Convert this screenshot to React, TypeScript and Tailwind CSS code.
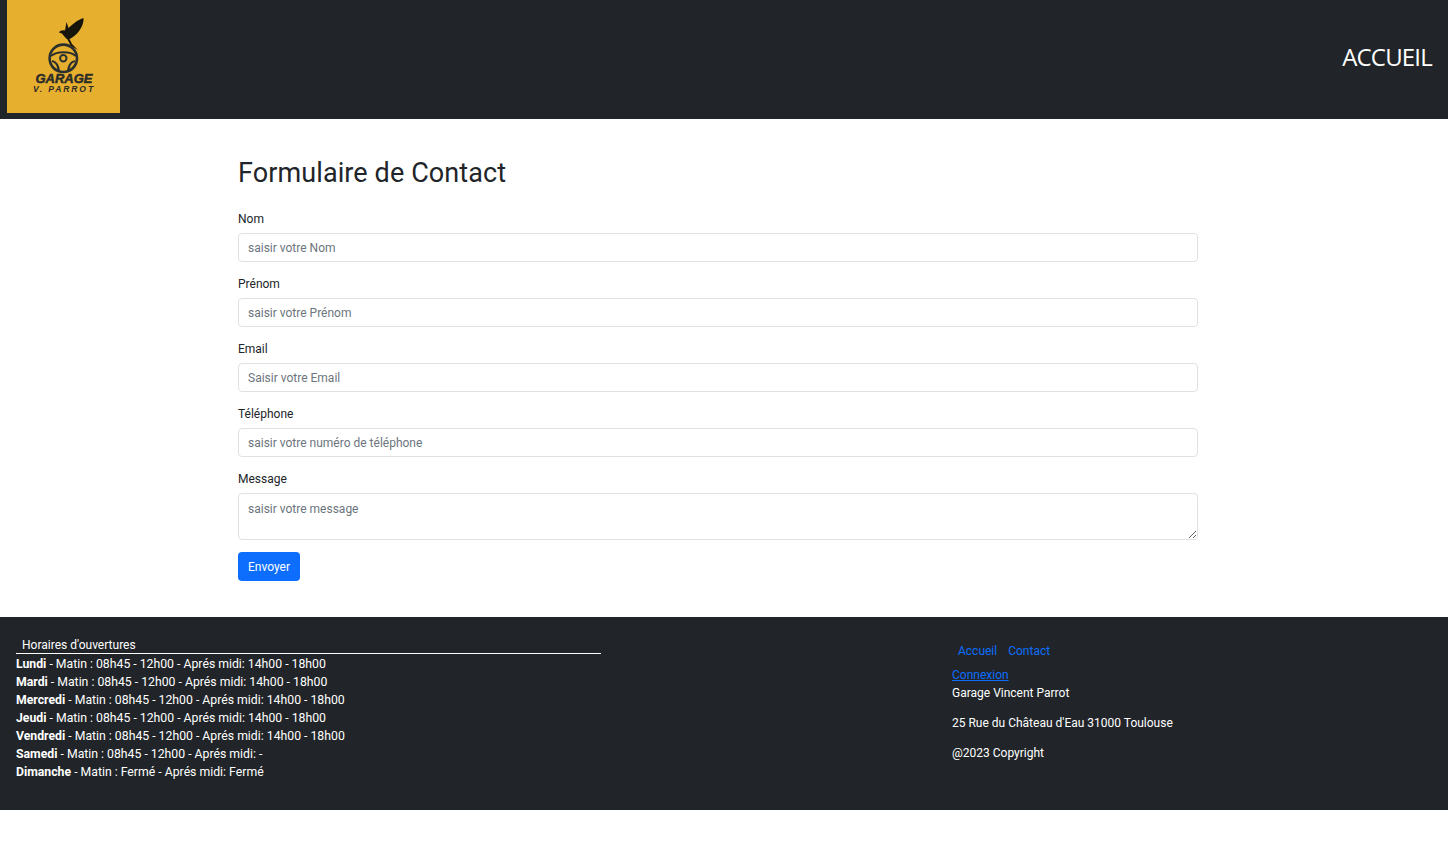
const fields = [
  { label: 'Nom', placeholder: 'saisir votre Nom' },
  { label: 'Prénom', placeholder: 'saisir votre Prénom' },
  { label: 'Email', placeholder: 'Saisir votre Email' },
  { label: 'Téléphone', placeholder: 'saisir votre numéro de téléphone' },
];

const hours = [
  { day: 'Lundi', text: ' - Matin : 08h45 - 12h00 - Aprés midi: 14h00 - 18h00' },
  { day: 'Mardi', text: ' - Matin : 08h45 - 12h00 - Aprés midi: 14h00 - 18h00' },
  { day: 'Mercredi', text: ' - Matin : 08h45 - 12h00 - Aprés midi: 14h00 - 18h00' },
  { day: 'Jeudi', text: ' - Matin : 08h45 - 12h00 - Aprés midi: 14h00 - 18h00' },
  { day: 'Vendredi', text: ' - Matin : 08h45 - 12h00 - Aprés midi: 14h00 - 18h00' },
  { day: 'Samedi', text: ' - Matin : 08h45 - 12h00 - Aprés midi: -' },
  { day: 'Dimanche', text: ' - Matin : Fermé - Aprés midi: Fermé' },
];

const Logo = () => (
  <svg viewBox="0 0 113 113" className="w-[113px] h-[113px] block">
    <rect width="113" height="113" fill="#e6af2e" />
    {/* oiseau */}
    <path
      d="M52 32.5 C53 30.5 55.5 30 58 30.5 L59.5 22 L61.5 28 C66 24 71 19.5 76.5 18 C77 23 74 30 69 34.5 C66.5 36.5 64.5 38 62.5 39 L65 44 L71 50 L64 46 L60.5 39.5 C58 37.5 56 35 55 33.5 Z"
      fill="#17140c"
    />
    {/* volant */}
    <g fill="none" stroke="#2b2f2e">
      <circle cx="56.3" cy="58.3" r="13.7" strokeWidth="2.6" />
      <circle cx="56.3" cy="58.3" r="3.2" strokeWidth="2" />
      <path d="M44 56 C50 51 63 51 69 56 M45 61 C50 62 51 66 52 71 M68 61 C63 62 62 66 61 71" strokeWidth="2.2" />
    </g>
    <text
      x="57"
      y="82.7"
      textAnchor="middle"
      fill="#2b2b28"
      stroke="#2b2b28"
      strokeWidth="0.5"
      className="font-['Liberation_Sans',sans-serif] font-bold italic text-[13px]"
    >
      GARAGE
    </text>
    <text
      x="57"
      y="92.3"
      textAnchor="middle"
      fill="#2b2b28"
      className="font-['Liberation_Sans',sans-serif] font-bold italic text-[8.5px] tracking-[1.9px]"
    >
      V. PARROT
    </text>
  </svg>
);

export default function App() {
  return (
    <div className="font-['Roboto',sans-serif] text-[12px] text-[#212529] bg-white min-h-[856px]">
      <header className="h-[119px] bg-[#212529] flex justify-between pl-[7px] pr-[16px]">
        <Logo />
        <a className="self-center text-white text-[24px] leading-[36px] mt-[-6px] font-['Open_Sans',sans-serif] tracking-[-0.8px]">ACCUEIL</a>
      </header>

      <main className="w-[960px] ml-[238px] pt-[36px] pb-[36px]">
        <h1 className="text-[27px] leading-[37px] mb-[16px] text-[#212529] tracking-[0.1px]">Formulaire de Contact</h1>
        <form>
          {fields.map(f => (
            <div key={f.label} className="mb-[11px]">
              <label className="block h-[21px] pt-[1px] leading-[21px] mb-[4px]">{f.label}</label>
              <input
                placeholder={f.placeholder}
                className="block w-full h-[29px] px-[9px] border border-[#dee2e6] rounded-[4px] placeholder:text-[#6c757d] outline-none"
              />
            </div>
          ))}
          <div className="mb-[12px]">
            <label className="block h-[21px] pt-[1px] leading-[21px] mb-[4px]">Message</label>
            <textarea
              placeholder="saisir votre message"
              className="block w-full h-[47px] px-[9px] py-[5px] leading-[20px] border border-[#dee2e6] rounded-[4px] placeholder:text-[#6c757d] outline-none"
            />
          </div>
          <button type="button" className="block w-[62px] h-[29px] pt-[1px] bg-[#0d6efd] text-white rounded-[4px]">Envoyer</button>
        </form>
      </main>

      <footer className="h-[193px] bg-[#212529] text-white flex pl-[16px] pt-[19px] leading-[18px]">
        <div className="w-[585px]">
          <div className="h-[18px] pl-[6px] border-b border-white leading-[19px]">Horaires d'ouvertures</div>
          <ul className="mt-[1px] text-[12.25px]">
            {hours.map(h => (
              <li key={h.day}><b className="font-bold">{h.day}</b>{h.text}</li>
            ))}
          </ul>
        </div>
        <div className="ml-[351px]">
          <nav className="flex gap-[11px] pl-[6px] pt-[6px] text-[#0d6efd]">
            <a>Accueil</a>
            <a>Contact</a>
          </nav>
          <a className="block mt-[6px] text-[#0d6efd] underline">Connexion</a>
          <p>Garage Vincent Parrot</p>
          <p className="mt-[12px]">25 Rue du Château d'Eau 31000 Toulouse</p>
          <p className="mt-[12px]">@2023 Copyright</p>
        </div>
      </footer>
    </div>
  );
}
